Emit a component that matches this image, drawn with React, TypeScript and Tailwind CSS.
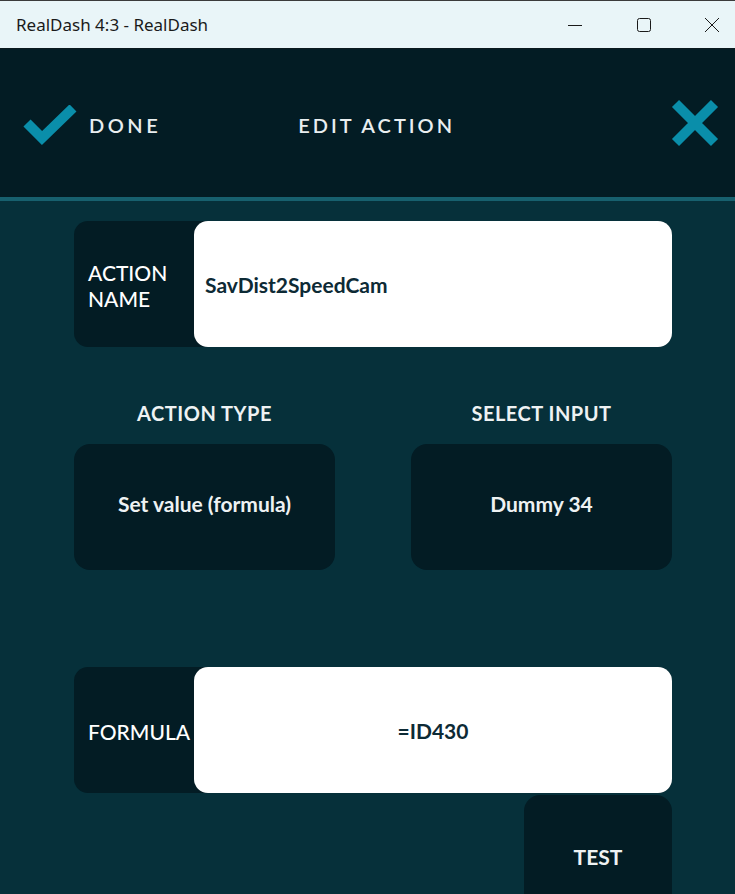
import React from 'react';

const lato = { fontFamily: 'Lato, "Open Sans", sans-serif' };

const TitleBar: React.FC = () => (
  <div className="h-[49px] shrink-0 bg-[#e9f5f8] border-t border-[#3b3b3b] border-b border-b-[#0b1a1f] flex items-center">
    <span className="ml-[16px] text-[17px] text-[#1a1a1a] font-['Noto_Sans',sans-serif]">RealDash 4:3 - RealDash</span>
    <div className="ml-auto flex items-center">
      <svg width="46" height="30" viewBox="0 0 46 30" className="mr-[23px]">
        <line x1="16" y1="15.5" x2="30" y2="15.5" stroke="#1a1a1a" strokeWidth="1" />
      </svg>
      <svg width="46" height="30" viewBox="0 0 46 30" className="mr-[22px]">
        <rect x="16.5" y="8.5" width="13" height="13" rx="2" fill="none" stroke="#1a1a1a" strokeWidth="1" />
      </svg>
      <svg width="46" height="30" viewBox="0 0 46 30">
        <path d="M16 8 L30 22 M30 8 L16 22" stroke="#1a1a1a" strokeWidth="1" />
      </svg>
    </div>
  </div>
);

const Header: React.FC = () => (
  <div className="h-[152px] shrink-0 bg-[#031c24] flex items-center border-b-[4px] border-[#17606e]" style={lato}>
    <svg width="56" height="44" viewBox="0 0 56 44" className="ml-[23px] mt-[8px]">
      <polyline points="4,18 19,33 50,3" fill="none" stroke="#0a8eaa" strokeWidth="10" strokeLinejoin="miter" />
    </svg>
    <span className="ml-[10px] mt-[4px] text-[20px] font-semibold tracking-[3.5px] text-[#e9eef0]">DONE</span>
    <span className="ml-[137px] mt-[4px] text-[20px] font-semibold tracking-[3px] text-[#e9eef0]">EDIT ACTION</span>
    <svg width="48" height="48" viewBox="0 0 48 48" className="ml-auto mr-[16px]">
      <path d="M4.5 4.5 L43.5 43.5 M43.5 4.5 L4.5 43.5" stroke="#0a8eaa" strokeWidth="10" />
    </svg>
  </div>
);

const Field: React.FC<{ label: React.ReactNode; value: string; center?: boolean }> = ({ label, value, center }) => (
  <div className="h-[126px] flex rounded-[14px] bg-[#031c24]">
    <div className="w-[120px] shrink-0 flex items-center pl-[14px] pt-[4px] text-[21px] leading-[26px] text-white font-medium">{label}</div>
    <div
      className={`flex-1 rounded-[14px] bg-white flex items-center pt-[2px] text-[21px] font-bold text-[#0d2a35] ${
        center ? 'justify-center' : 'pl-[11px]'
      }`}
    >
      {value}
    </div>
  </div>
);

const Picker: React.FC<{ title: string; value: string }> = ({ title, value }) => (
  <div className="w-[261px] flex flex-col items-center">
    <div className="text-[20px] font-bold tracking-[0.5px] text-[#eef2f3] h-[30px] leading-[30px]">{title}</div>
    <div className="mt-[16px] w-full h-[126px] pb-[7px] rounded-[16px] bg-[#031c24] flex items-center justify-center text-[21px] font-bold text-[#eef2f3]">
      {value}
    </div>
  </div>
);

export default function App() {
  return (
    <div className="w-[735px] h-[894px] overflow-hidden bg-[#06303a] flex flex-col">
      <TitleBar />
      <Header />
      <div className="pl-[74px] pt-[20px] w-[672px]" style={lato}>
        <Field
          label={
            <span>
              ACTION
              <br />
              NAME
            </span>
          }
          value="SavDist2SpeedCam"
        />
        <div className="mt-[51px] flex justify-between">
          <Picker title="ACTION TYPE" value="Set value (formula)" />
          <Picker title="SELECT INPUT" value="Dummy 34" />
        </div>
        <div className="mt-[97px]">
          <Field label="FORMULA" value="=ID430" center />
        </div>
        <div className="flex justify-end mt-[2px]">
          <div className="w-[148px] h-[126px] shrink-0 pb-[2px] rounded-[16px] bg-[#031c24] flex items-center justify-center text-[21px] font-bold text-[#eef2f3]">
            TEST
          </div>
        </div>
      </div>
    </div>
  );
}
